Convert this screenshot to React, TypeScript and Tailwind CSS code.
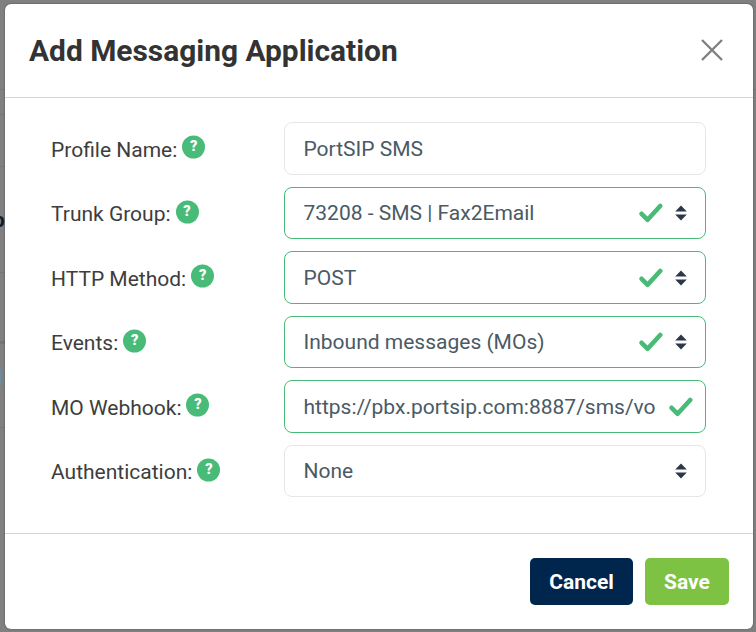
import React from "react";

function Help() {
  return (
    <span className="ml-[5px] inline-flex h-[23px] w-[23px] shrink-0 -translate-y-[1.5px] items-center justify-center rounded-full bg-[#48bb78] text-[14.5px] leading-none font-black text-white">
      ?
    </span>
  );
}

function Check({ className = "" }: { className?: string }) {
  return (
    <svg width="24" height="20" viewBox="0 0 24 20" className={className} fill="none">
      <path d="M2.6 10.8 L8.6 16.8 L21.2 3" stroke="#48bb78" strokeWidth="4.6" strokeLinecap="round" strokeLinejoin="round" />
    </svg>
  );
}

function Arrows() {
  return (
    <svg width="12" height="16" viewBox="0 0 12 16" className="ml-[12px]" fill="#2d3748">
      <path d="M6 0.5 L11.8 6.5 L0.2 6.5 Z" />
      <path d="M6 15.5 L11.8 9.5 L0.2 9.5 Z" />
    </svg>
  );
}

function Row({
  label,
  value,
  valid,
  select,
  top = "mt-[12px]",
}: {
  label: string;
  value: string;
  valid?: boolean;
  select?: boolean;
  top?: string;
}) {
  return (
    <div className={`flex h-[52.5px] items-center ${top}`}>
      <div className="flex w-[279px] items-center pl-[46px] text-[21px] text-[#3d3d3d]">
        <span className="translate-y-[2px]">{label}</span>
        <Help />
      </div>
      <div
        className={`flex h-full w-[422px] items-center rounded-[8px] border pr-[18px] pl-[18.5px] text-[21px] text-[#4a5a66] ${
          valid ? "border-[#48bb78]" : "border-[#e6e6e6]"
        }`}
      >
        <span className="flex-1 translate-y-[1px] overflow-hidden whitespace-nowrap">{value}</span>
        {valid && <Check className={select ? "" : "mr-[-6px] ml-[12px]"} />}
        {select && <Arrows />}
      </div>
    </div>
  );
}

const marks = [
  "top-[89px] left-0 h-px w-[5px] bg-[#777777]",
  "top-[114px] left-0 h-px w-[5px] bg-[#777777]",
  "top-[166px] left-0 h-px w-[5px] bg-[#777777]",
  "top-[272px] left-0 h-px w-[5px] bg-[#777777]",
  "top-[341px] left-0 h-[3px] w-[5px] bg-[#757575]",
  "top-[427px] left-0 h-px w-[5px] bg-[#777777]",
  "top-[370px] left-0 h-[15px] w-[1px] bg-[#6a8ea3]",
  "top-[89px] right-0 h-px w-[3px] bg-[#777777]",
];

export default function App() {
  return (
    <div
      className="relative flex h-[632px] w-[756px] overflow-hidden bg-[#808080] pt-[4px] pr-[3px] pb-[3px] pl-[5px]"
      style={{ fontFamily: "Roboto, sans-serif" }}
    >
      {marks.map((m) => (
        <div key={m} className={`absolute ${m}`} />
      ))}
      <span className="absolute top-[205px] left-[-7px] text-[20.8px] font-bold text-[#0f1c2e]">p</span>
      <div className="relative flex h-[625px] w-[748px] flex-col rounded-[6px] bg-white shadow-[0_0_2px_rgba(0,0,0,0.45)]">
        <div className="flex h-[94px] shrink-0 items-center justify-between border-b border-[#d4d4d4] pr-[29px] pl-[24px]">
          <h1 className="translate-y-[1px] text-[29.9px] font-bold text-[#333333]">Add Messaging Application</h1>
          <svg width="24" height="24" viewBox="0 0 24 24" fill="none" className="-translate-y-[1px]">
            <path d="M2 2 L22 22 M22 2 L2 22" stroke="#808080" strokeWidth="2.4" />
          </svg>
        </div>
        <div className="h-[436px] shrink-0 border-b border-[#d4d4d4] pt-[24.4px]">
          <Row label="Profile Name:" value="PortSIP SMS" top="" />
          <Row label="Trunk Group:" value="73208 - SMS | Fax2Email" valid select />
          <Row label="HTTP Method:" value="POST" valid select />
          <Row label="Events:" value="Inbound messages (MOs)" valid select />
          <Row label="MO Webhook:" value="https://pbx.portsip.com:8887/sms/vo" valid />
          <Row label="Authentication:" value="None" select />
        </div>
        <div className="flex flex-1 items-start justify-end gap-[12px] pt-[24px] pr-[24px]">
          <button className="h-[47px] w-[103px] rounded-[5px] bg-[#00264d] pt-[2px] text-[21px] font-bold text-white">Cancel</button>
          <button className="h-[47px] w-[84px] rounded-[5px] bg-[#7dc242] pt-[2px] text-[21px] font-bold text-white">Save</button>
        </div>
      </div>
    </div>
  );
}
